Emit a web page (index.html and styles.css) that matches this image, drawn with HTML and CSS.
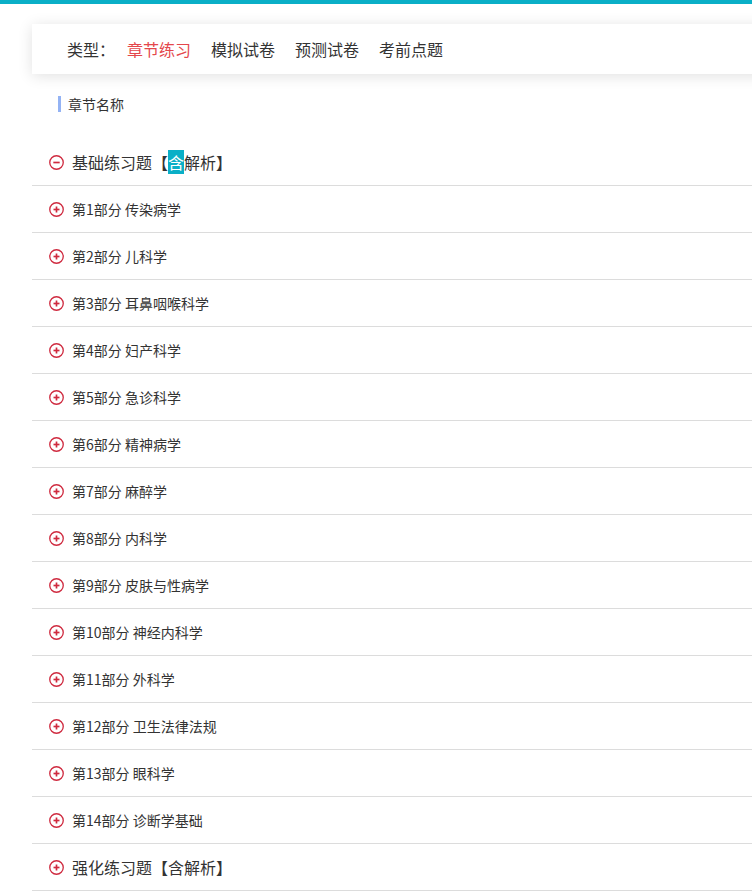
FILE: index.html
```html
<!DOCTYPE html>
<html lang="zh-CN">

<head>
    <meta charset="UTF-8">
    <meta name="viewport" content="width=device-width, initial-scale=1.0">
    <title>章节练习</title>
    <link rel="stylesheet" href="styles.css">
</head>

<body>
    <div class="top-bar"></div>
    <div class="container">
        <div class="type-card">
            <span class="type-label">类型：</span>
            <a class="type-item active">章节练习</a>
            <a class="type-item">模拟试卷</a>
            <a class="type-item">预测试卷</a>
            <a class="type-item">考前点题</a>
        </div>

        <div class="section-title">章节名称</div>

        <ul class="chapter-list">
            <li class="chapter-row chapter-group">
                <svg class="toggle" viewBox="0 0 16 16"><circle cx="8" cy="8" r="7.2"/><line x1="4.6" y1="8" x2="11.4" y2="8"/></svg>
                <span>基础练习题【<span class="mark">含</span>解析】</span>
            </li>
            <li class="chapter-row">
                <svg class="toggle" viewBox="0 0 16 16"><circle cx="8" cy="8" r="7.2"/><line x1="4.8" y1="8" x2="11.2" y2="8"/><line x1="8" y1="4.8" x2="8" y2="11.2"/></svg>
                <span>第1部分 传染病学</span>
            </li>
            <li class="chapter-row">
                <svg class="toggle" viewBox="0 0 16 16"><circle cx="8" cy="8" r="7.2"/><line x1="4.8" y1="8" x2="11.2" y2="8"/><line x1="8" y1="4.8" x2="8" y2="11.2"/></svg>
                <span>第2部分 儿科学</span>
            </li>
            <li class="chapter-row">
                <svg class="toggle" viewBox="0 0 16 16"><circle cx="8" cy="8" r="7.2"/><line x1="4.8" y1="8" x2="11.2" y2="8"/><line x1="8" y1="4.8" x2="8" y2="11.2"/></svg>
                <span>第3部分 耳鼻咽喉科学</span>
            </li>
            <li class="chapter-row">
                <svg class="toggle" viewBox="0 0 16 16"><circle cx="8" cy="8" r="7.2"/><line x1="4.8" y1="8" x2="11.2" y2="8"/><line x1="8" y1="4.8" x2="8" y2="11.2"/></svg>
                <span>第4部分 妇产科学</span>
            </li>
            <li class="chapter-row">
                <svg class="toggle" viewBox="0 0 16 16"><circle cx="8" cy="8" r="7.2"/><line x1="4.8" y1="8" x2="11.2" y2="8"/><line x1="8" y1="4.8" x2="8" y2="11.2"/></svg>
                <span>第5部分 急诊科学</span>
            </li>
            <li class="chapter-row">
                <svg class="toggle" viewBox="0 0 16 16"><circle cx="8" cy="8" r="7.2"/><line x1="4.8" y1="8" x2="11.2" y2="8"/><line x1="8" y1="4.8" x2="8" y2="11.2"/></svg>
                <span>第6部分 精神病学</span>
            </li>
            <li class="chapter-row">
                <svg class="toggle" viewBox="0 0 16 16"><circle cx="8" cy="8" r="7.2"/><line x1="4.8" y1="8" x2="11.2" y2="8"/><line x1="8" y1="4.8" x2="8" y2="11.2"/></svg>
                <span>第7部分 麻醉学</span>
            </li>
            <li class="chapter-row">
                <svg class="toggle" viewBox="0 0 16 16"><circle cx="8" cy="8" r="7.2"/><line x1="4.8" y1="8" x2="11.2" y2="8"/><line x1="8" y1="4.8" x2="8" y2="11.2"/></svg>
                <span>第8部分 内科学</span>
            </li>
            <li class="chapter-row">
                <svg class="toggle" viewBox="0 0 16 16"><circle cx="8" cy="8" r="7.2"/><line x1="4.8" y1="8" x2="11.2" y2="8"/><line x1="8" y1="4.8" x2="8" y2="11.2"/></svg>
                <span>第9部分 皮肤与性病学</span>
            </li>
            <li class="chapter-row">
                <svg class="toggle" viewBox="0 0 16 16"><circle cx="8" cy="8" r="7.2"/><line x1="4.8" y1="8" x2="11.2" y2="8"/><line x1="8" y1="4.8" x2="8" y2="11.2"/></svg>
                <span>第10部分 神经内科学</span>
            </li>
            <li class="chapter-row">
                <svg class="toggle" viewBox="0 0 16 16"><circle cx="8" cy="8" r="7.2"/><line x1="4.8" y1="8" x2="11.2" y2="8"/><line x1="8" y1="4.8" x2="8" y2="11.2"/></svg>
                <span>第11部分 外科学</span>
            </li>
            <li class="chapter-row">
                <svg class="toggle" viewBox="0 0 16 16"><circle cx="8" cy="8" r="7.2"/><line x1="4.8" y1="8" x2="11.2" y2="8"/><line x1="8" y1="4.8" x2="8" y2="11.2"/></svg>
                <span>第12部分 卫生法律法规</span>
            </li>
            <li class="chapter-row">
                <svg class="toggle" viewBox="0 0 16 16"><circle cx="8" cy="8" r="7.2"/><line x1="4.8" y1="8" x2="11.2" y2="8"/><line x1="8" y1="4.8" x2="8" y2="11.2"/></svg>
                <span>第13部分 眼科学</span>
            </li>
            <li class="chapter-row">
                <svg class="toggle" viewBox="0 0 16 16"><circle cx="8" cy="8" r="7.2"/><line x1="4.8" y1="8" x2="11.2" y2="8"/><line x1="8" y1="4.8" x2="8" y2="11.2"/></svg>
                <span>第14部分 诊断学基础</span>
            </li>
            <li class="chapter-row chapter-group">
                <svg class="toggle" viewBox="0 0 16 16"><circle cx="8" cy="8" r="7.2"/><line x1="4.8" y1="8" x2="11.2" y2="8"/><line x1="8" y1="4.8" x2="8" y2="11.2"/></svg>
                <span>强化练习题【含解析】</span>
            </li>
        </ul>
    </div>
</body>
</html>
```

FILE: styles.css
```css
:root {
    --teal: #0aafc7;
    --red: #e4474c;
    --icon-red: #cf2a3f;
    --text: #333;
    --line: #dcdcdc;
}

* {
    box-sizing: border-box;
    margin: 0;
    padding: 0;
}

html {
    overflow: hidden;
}

body {
    font-family: "Noto Sans CJK SC", "Microsoft YaHei", sans-serif;
    background-color: #fff;
    color: var(--text);
}

.top-bar {
    height: 4px;
    background-color: var(--teal);
}

.container {
    width: 1100px;
    margin-left: 32px;
}

.type-card {
    display: flex;
    align-items: center;
    height: 50px;
    margin-top: 20px;
    padding-left: 35px;
    background-color: #fff;
    box-shadow: 0 2px 14px rgba(0, 0, 0, 0.12);
    font-size: 16px;
}

.type-label {
    margin-right: 12px;
}

.type-item {
    margin-right: 20px;
    color: var(--text);
    cursor: pointer;
}

.type-item.active {
    color: var(--red);
}

.section-title {
    margin: 22px 0 0 26px;
    padding-left: 7px;
    border-left: 3px solid #94b3f4;
    font-size: 14px;
    line-height: 16px;
}

.chapter-list {
    list-style: none;
    margin-top: 27px;
}

.chapter-row {
    display: flex;
    align-items: center;
    gap: 8px;
    height: 47px;
    padding-left: 17px;
    border-bottom: 1px solid var(--line);
    font-size: 14px;
    cursor: pointer;
}

.chapter-group {
    font-size: 16px;
}

.toggle {
    width: 15px;
    height: 15px;
    fill: none;
    stroke: var(--icon-red);
    stroke-width: 1.4;
}

.toggle line {
    stroke-width: 1.8;
}

.mark {
    background-color: var(--teal);
    color: #fff;
}
```
